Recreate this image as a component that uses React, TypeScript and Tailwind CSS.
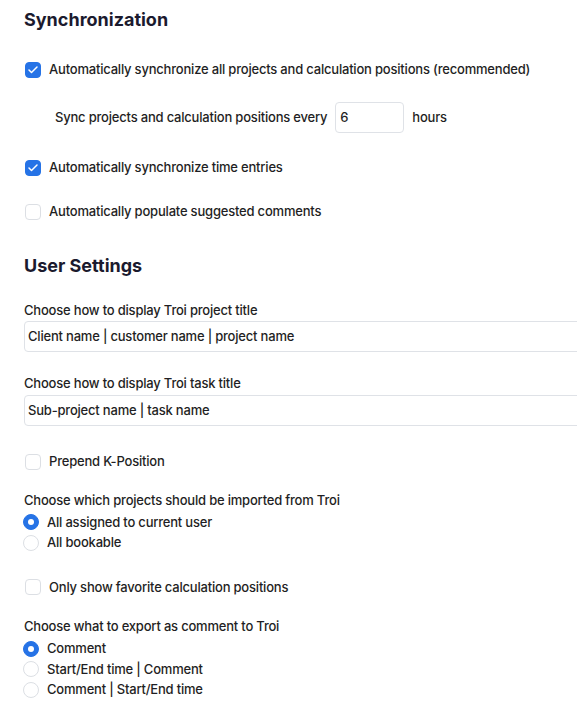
import { Check } from 'lucide-react';

const Checkbox = ({ checked }: { checked?: boolean }) => (
  <span
    className={`flex h-4 w-4 shrink-0 items-center justify-center rounded-[4px] border ${
      checked ? 'border-[#2673e6] bg-[#2673e6]' : 'border-[#dcdfe4] bg-white'
    }`}
  >
    {checked && <Check size={12} strokeWidth={3} className="text-white" />}
  </span>
);

const Radio = ({ checked }: { checked?: boolean }) => (
  <span
    className={`flex h-4 w-4 shrink-0 items-center justify-center rounded-full border ${
      checked ? 'border-[#2673e6] bg-[#2673e6]' : 'border-[#dcdfe4] bg-white'
    }`}
  >
    {checked && <span className="h-[6px] w-[6px] rounded-full bg-white" />}
  </span>
);

const CheckRow = ({ label, checked, className }: { label: string; checked?: boolean; className: string }) => (
  <label className={`flex h-5 items-center gap-[8px] pl-px ${className}`}>
    <Checkbox checked={checked} />
    <span className="whitespace-nowrap">{label}</span>
  </label>
);

const RadioRow = ({ label, checked }: { label: string; checked?: boolean }) => (
  <label className="flex h-[20.7px] items-center gap-[8px] -ml-px">
    <Radio checked={checked} />
    <span>{label}</span>
  </label>
);

const SelectBox = ({ value, className }: { value: string; className: string }) => (
  <div
    className={`flex h-[31px] w-[620px] items-center rounded-[4px] border border-[#dfe2e7] bg-white pl-[3px] ${className}`}
  >
    {value}
  </div>
);

export default function App() {
  return (
    <div
      className="w-full overflow-hidden bg-white text-[13px] font-medium tracking-[-0.2px] text-[#1f1f24]"
      style={{ fontFamily: 'Inter, "Noto Sans", sans-serif' }}
    >
      <div className="px-6 pt-[8px] pb-6">
        {/* Synchronization */}
        <h2 className="h-6 text-[18px] font-bold leading-6 tracking-normal text-[#1b1a2e]">Synchronization</h2>

        <CheckRow
          className="mt-[28px]"
          checked
          label="Automatically synchronize all projects and calculation positions (recommended)"
        />

        <div className="mt-[22px] flex h-[31px] items-center pl-[31px]">
          <span>Sync projects and calculation positions every</span>
          <div className="ml-[8px] flex h-[31px] w-[69px] items-center rounded-[4px] border border-[#dfe2e7] pl-[4px]">
            6
          </div>
          <span className="ml-[8px]">hours</span>
        </div>

        <CheckRow className="mt-[25px]" checked label="Automatically synchronize time entries" />
        <CheckRow className="mt-[24px]" label="Automatically populate suggested comments" />

        {/* User settings */}
        <h2 className="mt-[32px] h-6 text-[18px] font-bold leading-6 tracking-normal text-[#1b1a2e]">User Settings</h2>

        <div className="mt-[22px] h-5 leading-5">Choose how to display Troi project title</div>
        <SelectBox className="mt-px" value="Client name | customer name | project name" />

        <div className="mt-[21px] h-5 leading-5">Choose how to display Troi task title</div>
        <SelectBox className="mt-[2px]" value="Sub-project name | task name" />

        <CheckRow className="mt-[26px]" label="Prepend K-Position" />

        <div className="mt-[18px] h-5 leading-5">Choose which projects should be imported from Troi</div>
        <div className="mt-[2px]">
          <RadioRow checked label="All assigned to current user" />
          <RadioRow label="All bookable" />
        </div>

        <CheckRow className="mt-[24px]" label="Only show favorite calculation positions" />

        <div className="mt-[19px] h-5 leading-5">Choose what to export as comment to Troi</div>
        <div className="mt-[2px]">
          <RadioRow checked label="Comment" />
          <RadioRow label="Start/End time | Comment" />
          <RadioRow label="Comment | Start/End time" />
        </div>
      </div>
    </div>
  );
}
